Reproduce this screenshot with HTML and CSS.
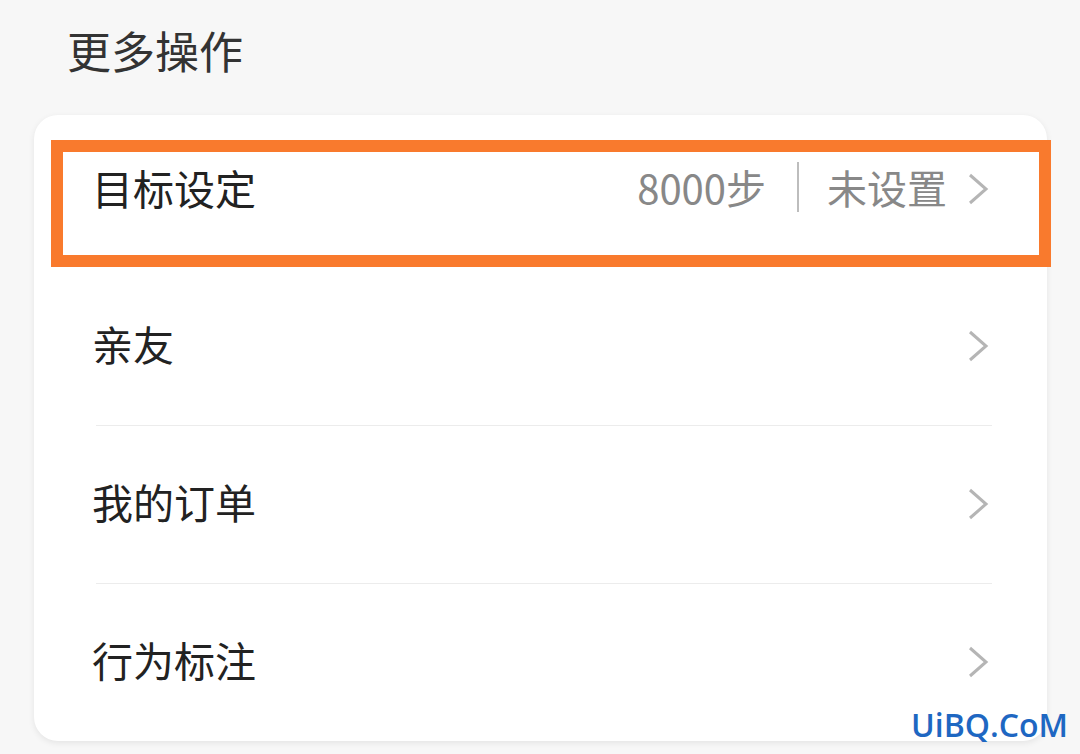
FILE: index.html
```html
<!DOCTYPE html>
<html>
<head>
    <meta charset="utf-8">
    <title>更多操作</title>
    <link rel="stylesheet" href="styles.css">
</head>
<body>
    <div class="page">
        <h2 class="title">更多操作</h2>
        <div class="card">
            <div class="row first">
                <span class="label">目标设定</span>
                <span class="value">8000步</span>
                <span class="sep"></span>
                <span class="value">未设置</span>
                <svg class="arrow" viewBox="0 0 24 36"><path d="M4 4 L20 18 L4 32"/></svg>
                <div class="highlight"></div>
            </div>
            <div class="row">
                <span class="label">亲友</span>
                <svg class="arrow" viewBox="0 0 24 36"><path d="M4 4 L20 18 L4 32"/></svg>
            </div>
            <div class="row">
                <span class="label">我的订单</span>
                <svg class="arrow" viewBox="0 0 24 36"><path d="M4 4 L20 18 L4 32"/></svg>
            </div>
            <div class="row last">
                <span class="label">行为标注</span>
                <svg class="arrow" viewBox="0 0 24 36"><path d="M4 4 L20 18 L4 32"/></svg>
            </div>
        </div>
        <div class="watermark">UiBQ.CoM</div>
    </div>
</body>
</html>
```

FILE: styles.css
```css
html, body {
    margin: 0;
    padding: 0;
    background: #f7f7f7;
    font-family: "Noto Sans CJK SC", "Noto Sans", sans-serif;
}
.page {
    position: relative;
    width: 1080px;
    height: 754px;
    overflow: hidden;
}
.title {
    margin: 0;
    padding: 22px 0 0 67px;
    height: 115px;
    box-sizing: border-box;
    font-size: 44px;
    font-weight: normal;
    line-height: 56px;
    color: #333;
}
.card {
    margin: 0 0 0 34px;
    width: 1013px;
    background: #fff;
    border-radius: 24px;
    box-shadow: 0 2px 6px rgba(0, 0, 0, 0.08);
}
.row {
    position: relative;
    height: 157px;
    display: flex;
    align-items: center;
    margin: 0 55px 0 62px;
    border-bottom: 1px solid #ececec;
}
.row.first {
    height: 153px;
    border-bottom: none;
}
.row.first .label,
.row.first .value {
    margin-top: -10px;
}
.row.first .arrow {
    margin-top: -6px;
}
.row.last {
    border-bottom: none;
}
.label {
    flex: 1;
    font-size: 41px;
    color: #222;
    margin-left: -4px;
    margin-top: -8px;
}
.value {
    font-size: 40px;
    color: #888;
}
.sep {
    width: 2px;
    height: 50px;
    margin: -10px 28px 0 31px;
    background: #bdbdbd;
}
.arrow {
    width: 24px;
    height: 36px;
    margin: -2px 2px 0 19px;
    fill: none;
    stroke: #b5b5b5;
    stroke-width: 3;
}
.highlight {
    position: absolute;
    left: -45px;
    top: 25px;
    width: 976px;
    height: 103px;
    border: 12px solid #f97a2d;
}
.watermark {
    position: absolute;
    right: 12px;
    bottom: 8px;
    font-family: "Open Sans", sans-serif;
    font-size: 32px;
    font-weight: 600;
    color: #1e67c2;
}
```
